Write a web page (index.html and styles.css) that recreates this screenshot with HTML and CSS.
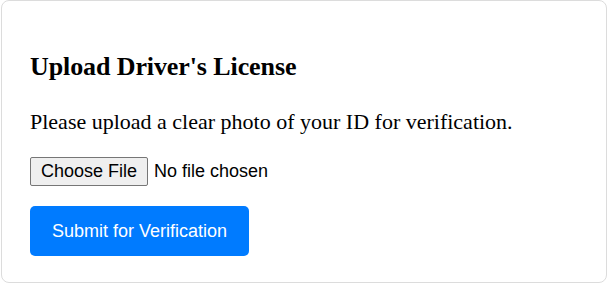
FILE: index.html
```html
<!DOCTYPE html>
<html>
<head>
<meta charset="utf-8">
<link rel="stylesheet" href="styles.css">
</head>
<body>
<div class="card">
  <h2 class="title">Upload Driver's License</h2>
  <p class="desc">Please upload a clear photo of your ID for verification.</p>
  <div class="file-row">
    <button class="choose" type="button">Choose File</button>
    <span class="file-name">No file chosen</span>
  </div>
  <button class="submit" type="button">Submit for Verification</button>
</div>
</body>
</html>
```
FILE: styles.css
```css
html, body {
  margin: 0;
  padding: 0;
  background: #fff;
}
body {
  padding: 0 1px 0 1px;
}
.card {
  box-sizing: border-box;
  width: 606px;
  border: 1px solid #dcdcdc;
  border-radius: 8px;
  padding: 30px 28px 26px 28px;
  font-family: "Liberation Serif", "Times New Roman", serif;
  color: #000;
  display: flex;
  flex-direction: column;
  align-items: flex-start;
}
.card > * {
  flex-shrink: 0;
}
.title {
  margin: 21px 0 0 0;
  font-size: 26px;
  font-weight: bold;
  line-height: 30px;
  letter-spacing: -0.1px;
}
.desc {
  margin: 27px 0 0 0;
  font-size: 22px;
  line-height: 25px;
}
.file-row {
  margin-top: 23px;
  display: flex;
  align-items: center;
  gap: 6px;
  font-family: "Liberation Sans", Arial, sans-serif;
  font-size: 18px;
}
.choose {
  font-family: "Liberation Sans", Arial, sans-serif;
  font-size: 18px;
  color: #000;
  background: #efefef;
  border: 1px solid #767676;
  border-radius: 2px;
  padding: 1px 10px;
  height: 29px;
}
.submit {
  margin-top: 20px;
  font-family: "Liberation Sans", Arial, sans-serif;
  font-size: 18px;
  color: #fff;
  background: #007bff;
  border: none;
  border-radius: 5px;
  padding: 0 22px;
  height: 50px;
}
```
